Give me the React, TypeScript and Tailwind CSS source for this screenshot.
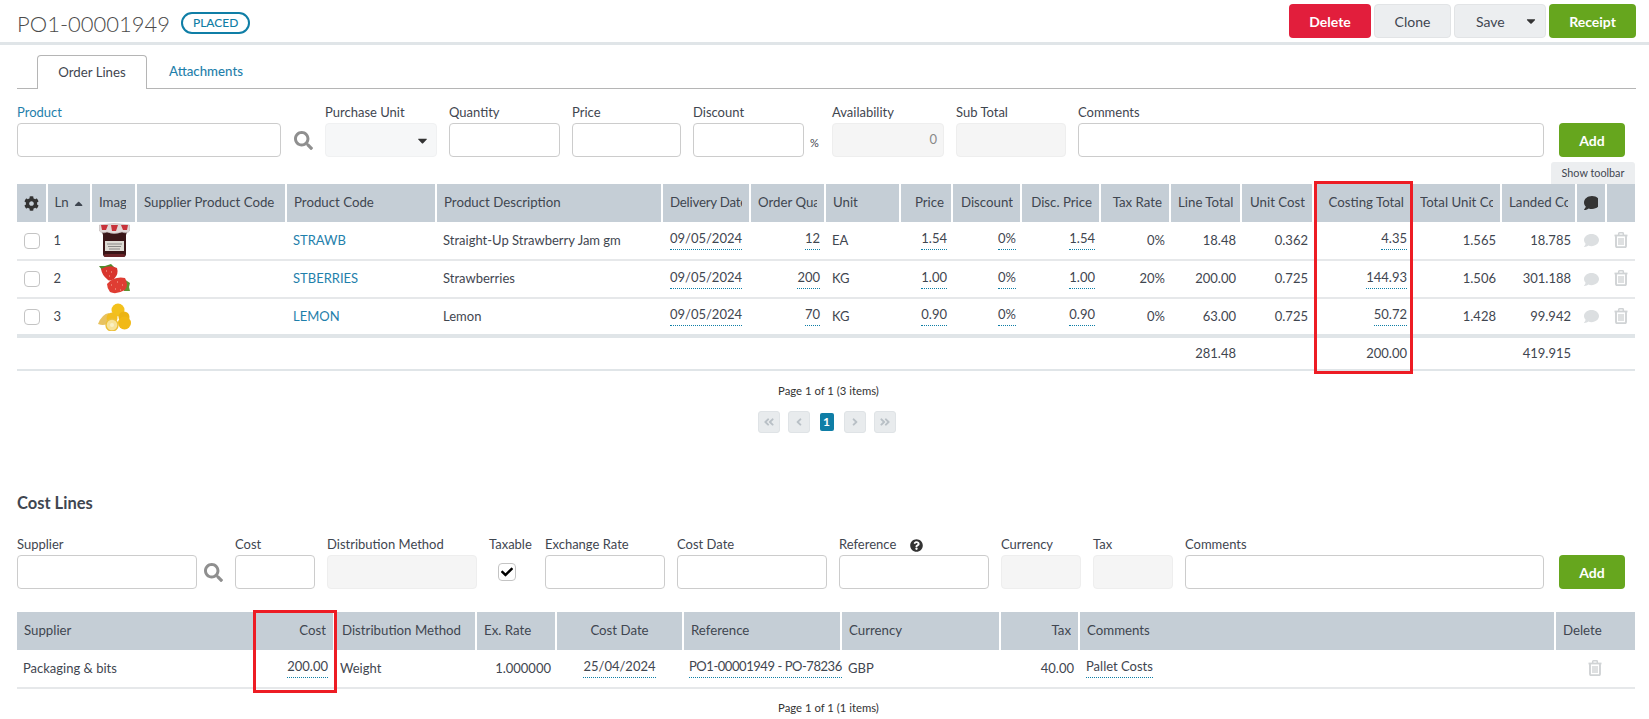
import { ReactNode } from "react";
import {
  FaAngleDoubleLeft,
  FaAngleDoubleRight,
  FaAngleLeft,
  FaAngleRight,
  FaCaretDown,
  FaCaretUp,
  FaCheck,
  FaCog,
  FaComment,
  FaQuestionCircle,
  FaSearch,
} from "react-icons/fa";

const inputCls = "h-[34px] rounded-[4px] border border-[#cccccc] bg-white";
const disabledCls = "h-[34px] rounded-[4px] border border-[#eeeeee] bg-[#f5f5f5]";

function Field({ label, width, disabled, blue, extra }: { label: string; width: string; disabled?: boolean; blue?: boolean; extra?: ReactNode }) {
  return (
    <div className={`${width} shrink-0`}>
      <div className={`flex h-[18px] items-center mb-[1px] whitespace-nowrap ${blue ? "text-[#1f80ab]" : ""}`}>
        {label}
        {extra}
      </div>
      <div className={`${disabled ? disabledCls : inputCls} flex items-center justify-end pr-[6px] text-[#999]`} />
    </div>
  );
}

function AddButton() {
  return (
    <button className="ml-[3px] mt-[19px] h-[34px] w-[66px] shrink-0 rounded-[4px] bg-[#66a61e] text-[14px] font-bold text-white">
      Add
    </button>
  );
}

function SearchIcon({ className }: { className?: string }) {
  return (
    <div className={`mt-[19px] flex h-[34px] w-[20px] shrink-0 items-center justify-center ${className ?? ""}`}>
      <FaSearch className="size-[19px] text-[#8f8f8f]" />
    </div>
  );
}

function TrashIcon() {
  return (
    <svg viewBox="0 0 14 16" className="mx-auto h-[16px] w-[14px] -translate-y-[1px]" fill="none" stroke="#d0d3d5">
      <path d="M0.5 3.5h13" strokeWidth="1.8" />
      <path d="M4.7 3V1.5q0-.7.7-.7h3.2q.7 0 .7.7V3" strokeWidth="1.5" />
      <path d="M2 4v10q0 1.2 1.2 1.2h7.6q1.2 0 1.2-1.2V4" strokeWidth="1.9" />
      <path d="M5 6v7M7 6v7M9 6v7" strokeWidth="1.4" />
    </svg>
  );
}

function Jam() {
  return (
    <svg viewBox="0 0 31 35" className="h-[35px] w-[31px]">
      <path d="M3 9h25l-1 3v19q0 3-3 3H7q-3 0-3-3V12z" fill="#3a1618" />
      <path d="M0.500 2 Q15 -1 30.500 2 L30.500 8 Q28 11 23 9 Q15 12 8 9 Q3 11 0.500 8Z" fill="#e2d9d9" stroke="#bdb5b5" strokeWidth="0.600" />
      <path d="M2 2h7l-2 5-4 0zM12 2h7l-2 6h-4zM22 2h7l-1 5-4 0z" fill="#c8323a" />
      <rect x="6" y="18" width="19" height="10" fill="#dedbd4" />
      <path d="M8 21h15M9 23.500h13M10 26h11" stroke="#666" strokeWidth="0.700" />
      <rect x="5" y="31" width="21" height="3" rx="1.500" fill="#6a2428" />
    </svg>
  );
}

function Strawberries() {
  return (
    <svg viewBox="0 0 31 30" className="h-[30px] w-[31px]">
      <path d="M0 2l6 0 6-2 4 4-7 3-6-1z" fill="#4e8a2c" />
      <path d="M2 5 Q10 0 18 4 Q20 10 15 15 Q10 18 8 15 Q3 11 2 5Z" fill="#d9352e" />
      <path d="M25 15l6 4-1 4 1 4-6 0z" fill="#5b9433" />
      <path d="M8 20 Q15 12 26 14 Q30 21 26 26 Q17 31 11 28 Q8 24 8 20Z" fill="#df3d33" />
      <path d="M12 21h1M18 18h1M23 21h1M16 25h1M21 26h1M7 7h1M12 8h1M10 12h1" stroke="#f4b6a0" strokeWidth="1" />
    </svg>
  );
}

function Lemons() {
  return (
    <svg viewBox="0 0 33 28" className="h-[28px] w-[33px]">
      <path d="M0 21 Q4 11 11 10 L9 21 Q5 23 0 21Z" fill="#e8c260" />
      <circle cx="20" cy="7" r="6.500" fill="#f3c11c" />
      <circle cx="26" cy="14" r="5.500" fill="#ecb414" />
      <circle cx="14" cy="15" r="5.500" fill="#f2bd20" />
      <circle cx="26.500" cy="20" r="6.500" fill="#f1b915" />
      <circle cx="14" cy="22" r="6" fill="#f7e299" stroke="#ecc03a" strokeWidth="1.400" />
      <circle cx="14" cy="22" r="2" fill="#faf0c4" />
    </svg>
  );
}

function Editable({ children }: { children: ReactNode }) {
  return (
    <span className="-translate-y-[1px] inline-block border-b border-dotted border-[#0f7ea6] pb-[3px] leading-[16px]">{children}</span>
  );
}

type Col = { label: ReactNode; width: string; right?: boolean; center?: boolean };

function Th({ col }: { col: Col }) {
  return (
    <th className={`${col.width} h-[38px] border-r-2 border-white bg-[#c5ced6] px-[7px] text-[13.25px] font-normal last:border-r-0 ${col.right ? "text-right" : col.center ? "text-center" : "text-left"}`}>
      <div className="overflow-hidden whitespace-nowrap">{col.label}</div>
    </th>
  );
}

const orderCols: Col[] = [
  { label: <FaCog className="mx-auto size-[15px] text-[#333]" />, width: "w-[29.5px]" },
  { label: <span className="flex items-center gap-[5px]">Ln <FaCaretUp className="size-[13px]" /></span>, width: "w-[44.5px]" },
  { label: <span className="block w-[27px] overflow-hidden">Image</span>, width: "w-[45px]" },
  { label: "Supplier Product Code", width: "w-[150px]" },
  { label: "Product Code", width: "w-[150px]" },
  { label: "Product Description", width: "w-[226px]" },
  { label: <span className="tracking-[-0.2px]">Delivery Date</span>, width: "w-[88px]" },
  { label: "Order Quantity", width: "w-[75px]" },
  { label: "Unit", width: "w-[75px]" },
  { label: "Price", width: "w-[52px]", right: true },
  { label: "Discount", width: "w-[69px]", right: true },
  { label: "Disc. Price", width: "w-[79px]", right: true },
  { label: "Tax Rate", width: "w-[70px]", right: true },
  { label: "Line Total", width: "w-[71px]", right: true },
  { label: "Unit Cost", width: "w-[72px]", right: true },
  { label: "Costing Total", width: "w-[99px]", right: true },
  { label: "Total Unit Cost", width: "w-[89px]", right: true },
  { label: "Landed Cost", width: "w-[75px]", right: true },
  { label: <FaComment className="mx-auto size-[16px] text-[#333]" />, width: "w-[30px]" },
  { label: "", width: "w-[29px]" },
];

const orderRows = [
  { ln: 1, img: <Jam />, code: "STRAWB", desc: "Straight-Up Strawberry Jam gm", qty: "12", unit: "EA", price: "1.54", dp: "1.54", tax: "0%", line: "18.48", uc: "0.362", ct: "4.35", tuc: "1.565", land: "18.785" },
  { ln: 2, img: <Strawberries />, code: "STBERRIES", desc: "Strawberries", qty: "200", unit: "KG", price: "1.00", dp: "1.00", tax: "20%", line: "200.00", uc: "0.725", ct: "144.93", tuc: "1.506", land: "301.188" },
  { ln: 3, img: <Lemons />, code: "LEMON", desc: "Lemon", qty: "70", unit: "KG", price: "0.90", dp: "0.90", tax: "0%", line: "63.00", uc: "0.725", ct: "50.72", tuc: "1.428", land: "99.942" },
];

const costCols: Col[] = [
  { label: "Supplier", width: "w-[238px]" },
  { label: "Cost", width: "w-[79px]", right: true },
  { label: "Distribution Method", width: "w-[142px]" },
  { label: "Ex. Rate", width: "w-[80px]" },
  { label: "Cost Date", width: "w-[127px]", center: true },
  { label: "Reference", width: "w-[158px]" },
  { label: "Currency", width: "w-[159px]" },
  { label: "Tax", width: "w-[79px]", right: true },
  { label: "Comments", width: "w-[476px]" },
  { label: "Delete", width: "w-[80px]" },
];

function PagerBtn({ children }: { children: ReactNode }) {
  return (
    <span className="flex h-[22px] w-[22px] items-center justify-center rounded-[3px] border border-[#dfe3e6] bg-[#e8ebed] text-[#b9c0c6]">
      {children}
    </span>
  );
}

function RedBox({ className }: { className: string }) {
  return <div className={`pointer-events-none absolute border-[3px] border-[#ed1c24] ${className}`} />;
}

const td = "px-[7px] border-b-2 border-[#e6e8ea] h-[38px]";
const tdr = `${td} text-right !pr-[5px]`;
const foot = "border-b-2 border-[#e0e5e8]";

export default function App() {
  return (
    <div className="h-[719px] w-[1649px] overflow-hidden bg-white font-['Lato','Liberation_Sans',sans-serif] text-[13px] text-[#3f4650]">
      <header className="flex h-[45px] items-start justify-between border-b-[3px] border-[#e0e5e8] pl-[17px] pr-[13px] pt-[4px]">
        <div className="flex h-[38px] items-center gap-[11px]">
          <h1 className="text-[22px] font-light text-[#4a4a4a]">PO1-00001949</h1>
          <span className="flex h-[22px] w-[69px] items-center justify-center rounded-full border-2 border-[#0f7ea6] text-[12px] font-medium text-[#0f7ea6]">PLACED</span>
        </div>
        <div className="flex h-[34px] gap-[3px] text-[14px]">
          <button className="w-[82px] rounded-[4px] bg-[#e21e3c] font-bold text-white">Delete</button>
          <button className="w-[77px] rounded-[4px] border border-[#e2e4e6] bg-[#eceef0]">Clone</button>
          <button className="flex w-[92px] items-center justify-between rounded-[4px] border border-[#e2e4e6] bg-[#eceef0] pl-[21px] pr-[7px]">
            Save <FaCaretDown className="size-[14px] text-[#333]" />
          </button>
          <button className="w-[87px] rounded-[4px] bg-[#66a61e] font-bold text-white">Receipt</button>
        </div>
      </header>

      <nav className="mx-[13px] ml-[17px] mt-[10px] flex h-[34px] border-b border-[#b5b5b5] pl-[20px]">
        <div className="flex h-[34px] w-[110px] items-center justify-center rounded-t-[4px] border border-b-0 border-[#b5b5b5] bg-white text-[13.25px]">Order Lines</div>
        <div className="ml-[22px] flex h-[34px] items-center text-[13.25px] font-medium text-[#1f80ab]">Attachments</div>
      </nav>

      <section className="mt-[15px] flex gap-[12px] pl-[17px]">
        <Field label="Product" width="w-[264px]" blue />
        <SearchIcon />
        <div className="w-[112px] shrink-0">
          <div className="mb-[1px] flex h-[18px] items-center">Purchase Unit</div>
          <div className="flex h-[34px] items-center justify-end rounded-[4px] border border-[#f0f1f2] bg-[#f6f7f8] pr-[6px]">
            <FaCaretDown className="size-[15px] text-[#333]" />
          </div>
        </div>
        <Field label="Quantity" width="w-[111px]" />
        <Field label="Price" width="w-[109px]" />
        <div className="flex w-[127px] shrink-0 gap-[6px]">
          <Field label="Discount" width="w-[111px]" />
          <span className="mt-[31px] text-[11px]">%</span>
        </div>
        <div className="w-[112px] shrink-0">
          <div className="mb-[1px] flex h-[18px] items-center">Availability</div>
          <div className={`${disabledCls} flex items-center justify-end pr-[6px] text-[#888]`}>0</div>
        </div>
        <Field label="Sub Total" width="w-[110px]" disabled />
        <Field label="Comments" width="w-[466px]" />
        <AddButton />
      </section>

      <div className="relative mx-[14px] ml-[17px] mt-[27px] w-[1618px]">
        <div className="absolute -top-[22px] right-0 flex h-[22px] w-[84px] items-center justify-center rounded-t-[3px] bg-[#eceef0] text-[10.8px]">Show toolbar</div>
        <RedBox className="-top-[3px] left-[1297px] h-[193px] w-[99px]" />
        <table className="w-[1618px] table-fixed border-collapse">
          <thead>
            <tr>
              {orderCols.map((c, i) => (
                <Th key={i} col={c} />
              ))}
            </tr>
          </thead>
          <tbody>
            {orderRows.map((r) => (
              <tr key={r.ln}>
                <td className={td}>
                  <span className="block size-[16px] rounded-[4px] border border-[#c4c4c4]" />
                </td>
                <td className={td}>{r.ln}</td>
                <td className={`${td} !pl-[2px] !pr-0`}>
                  <div className="flex justify-center">{r.img}</div>
                </td>
                <td className={td} />
                <td className={`${td} text-[#1f80ab]`}>{r.code}</td>
                <td className={td}>{r.desc}</td>
                <td className={`${td} text-center !px-0`}><Editable>09/05/2024</Editable></td>
                <td className={tdr}><Editable>{r.qty}</Editable></td>
                <td className={td}>{r.unit}</td>
                <td className={tdr}><Editable>{r.price}</Editable></td>
                <td className={tdr}><Editable>0%</Editable></td>
                <td className={tdr}><Editable>{r.dp}</Editable></td>
                <td className={tdr}>{r.tax}</td>
                <td className={tdr}>{r.line}</td>
                <td className={tdr}>{r.uc}</td>
                <td className={tdr}><Editable>{r.ct}</Editable></td>
                <td className={tdr}>{r.tuc}</td>
                <td className={tdr}>{r.land}</td>
                <td className={td}>
                  <FaComment className="mx-auto size-[15px] text-[#dcdfe1]" />
                </td>
                <td className={td}>
                  <TrashIcon />
                </td>
              </tr>
            ))}
          </tbody>
          <tfoot>
            <tr className="border-t-[4px] border-[#e0e5e8]">
              <td colSpan={13} className={`h-[34px] ${foot}`} />
              <td className={`${foot} pr-[5px] text-right`}>281.48</td>
              <td className={foot} />
              <td className={`${foot} pr-[5px] text-right`}>200.00</td>
              <td className={foot} />
              <td className={`${foot} pr-[5px] text-right`}>419.915</td>
              <td colSpan={2} className={foot} />
            </tr>
          </tfoot>
        </table>
      </div>

      <p className="mt-[11px] h-[18px] pl-[8px] text-center text-[11.3px] leading-[18px] text-[#333]">Page 1 of 1 (3 items)</p>
      <div className="mt-[11px] flex items-center justify-center pl-[4px]">
        <div className="flex items-center gap-[8px]">
          <PagerBtn><FaAngleDoubleLeft className="size-[12px]" /></PagerBtn>
          <PagerBtn><FaAngleLeft className="size-[12px]" /></PagerBtn>
          <span className="mx-[2px] flex h-[18px] w-[14px] items-center justify-center rounded-[2px] bg-[#0f7ea6] text-[12px] font-bold text-white">1</span>
          <PagerBtn><FaAngleRight className="size-[12px]" /></PagerBtn>
          <PagerBtn><FaAngleDoubleRight className="size-[12px]" /></PagerBtn>
        </div>
      </div>

      <h2 className="ml-[17px] mt-[59px] h-[22px] text-[16.5px] font-bold leading-[22px] text-[#3f4650]">Cost Lines</h2>

      <section className="mt-[22px] flex gap-[12px] pl-[17px]">
        <Field label="Supplier" width="w-[180px]" />
        <SearchIcon className="-ml-[6px]" />
        <Field label="Cost" width="w-[80px]" />
        <Field label="Distribution Method" width="w-[150px]" disabled />
        <div className="w-[44px] shrink-0">
          <div className="mb-[1px] flex h-[18px] items-center">Taxable</div>
          <div className="flex h-[34px] items-center pl-[9px]">
            <span className="flex size-[18px] items-center justify-center rounded-[4px] border border-[#c4c4c4]">
              <FaCheck className="size-[12px] text-black" />
            </span>
          </div>
        </div>
        <Field label="Exchange Rate" width="w-[120px]" />
        <Field label="Cost Date" width="w-[150px]" />
        <Field label="Reference" width="w-[150px]" extra={<FaQuestionCircle className="ml-[14px] size-[13px] text-[#333]" />} />
        <Field label="Currency" width="w-[80px]" disabled />
        <Field label="Tax" width="w-[80px]" disabled />
        <Field label="Comments" width="w-[359px]" />
        <AddButton />
      </section>

      <div className="relative ml-[17px] mt-[23px] w-[1618px]">
        <RedBox className="-top-[2px] left-[236px] h-[83px] w-[84px]" />
        <table className="w-[1618px] table-fixed border-collapse">
          <thead>
            <tr>
              {costCols.map((c, i) => (
                <Th key={i} col={c} />
              ))}
            </tr>
          </thead>
          <tbody>
            <tr>
              <td className={`${td} !pl-[6px]`}>Packaging &amp; bits</td>
              <td className={`${tdr} !pr-[6px]`}><Editable>200.00</Editable></td>
              <td className={`${td} !px-[6px]`}>Weight</td>
              <td className={`${tdr} !pr-[5px]`}>1.000000</td>
              <td className={`${td} text-center`}><Editable>25/04/2024</Editable></td>
              <td className={`${td} !pl-[6px] !pr-0 whitespace-nowrap tracking-[-0.45px]`}><Editable>PO1-00001949 - PO-78236</Editable></td>
              <td className={td}>GBP</td>
              <td className={tdr}>40.00</td>
              <td className={td}><Editable>Pallet Costs</Editable></td>
              <td className={td}>
                <TrashIcon />
              </td>
            </tr>
          </tbody>
        </table>
      </div>

      <p className="mt-[10px] h-[18px] pl-[8px] text-center text-[11.3px] leading-[18px] text-[#333]">Page 1 of 1 (1 items)</p>
    </div>
  );
}
